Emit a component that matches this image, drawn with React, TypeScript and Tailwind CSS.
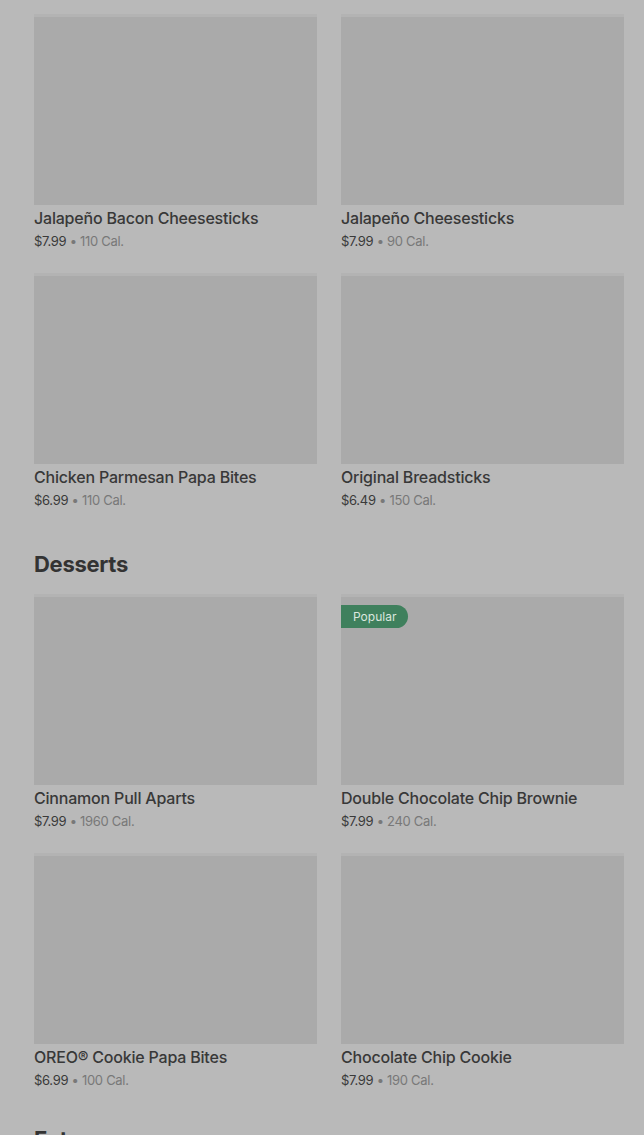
import React from "react";

type Item = {
  name: string;
  price: string;
  cal: string;
  popular?: boolean;
};

const sides: Item[] = [
  { name: "Jalapeño Bacon Cheesesticks", price: "$7.99", cal: "110 Cal." },
  { name: "Jalapeño Cheesesticks", price: "$7.99", cal: "90 Cal." },
  { name: "Chicken Parmesan Papa Bites", price: "$6.99", cal: "110 Cal." },
  { name: "Original Breadsticks", price: "$6.49", cal: "150 Cal." },
];

const desserts: Item[] = [
  { name: "Cinnamon Pull Aparts", price: "$7.99", cal: "1960 Cal." },
  { name: "Double Chocolate Chip Brownie", price: "$7.99", cal: "240 Cal.", popular: true },
  { name: "OREO® Cookie Papa Bites", price: "$6.99", cal: "100 Cal." },
  { name: "Chocolate Chip Cookie", price: "$7.99", cal: "190 Cal." },
];

const MenuCard: React.FC<{ item: Item }> = ({ item }) => (
  <div className="flex flex-col">
    <div className="relative h-[191px] border-t-[3px] border-[#b3b3b3] bg-[#aaaaaa]">
      {item.popular && (
        <span className="absolute left-0 top-[8px] flex h-[23px] items-center rounded-r-full bg-[#3f805d] pl-[12px] pr-[12px] text-[12px] text-[#dbe7df]">
          Popular
        </span>
      )}
    </div>
    <h3 className="mt-[1px] text-[16px] font-medium leading-[24px] tracking-[-0.2px] text-[#383838]">
      {item.name}
    </h3>
    <p className="mt-[1px] text-[13px] leading-[20px] tracking-[-0.3px]">
      <span className="text-[#3a3a3a]">{item.price}</span>
      <span className="text-[#787878]"> • {item.cal}</span>
    </p>
  </div>
);

const Section: React.FC<{ items: Item[] }> = ({ items }) => (
  <div className="grid grid-cols-2 gap-x-[24px] gap-y-[22px]">
    {items.map((it) => (
      <MenuCard key={it.name} item={it} />
    ))}
  </div>
);

export default function App() {
  return (
    <div
      className="h-[1135px] overflow-hidden bg-[#b9b9b9] pl-[34px] pr-[20px] pt-[14px]"
      style={{ fontFamily: "Inter, 'Noto Sans', sans-serif" }}
    >
      <Section items={sides} />
      <h2 className="mb-[16px] mt-[40px] text-[22px] font-bold leading-[28px] tracking-[-0.3px] text-[#333333]">
        Desserts
      </h2>
      <Section items={desserts} />
      <h2 className="mt-[35px] text-[22px] font-bold leading-[28px] tracking-[-0.3px] text-[#333333]">
        Extras
      </h2>
    </div>
  );
}
